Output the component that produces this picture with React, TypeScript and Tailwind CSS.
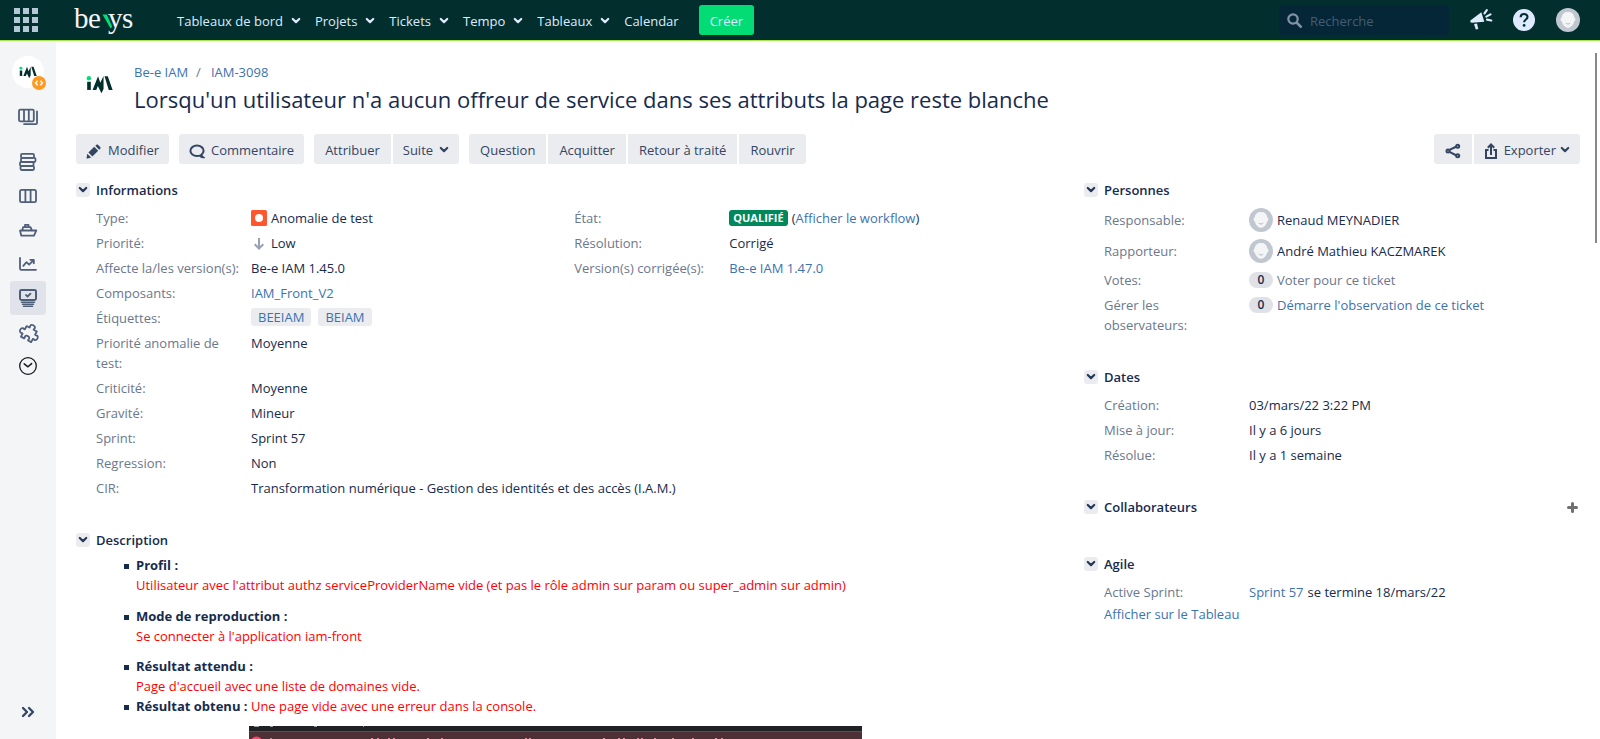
import type { ReactNode } from "react";

const navItems = ["Tableaux de bord", "Projets", "Tickets", "Tempo", "Tableaux"];

function Chevron({ className = "" }: { className?: string }) {
  return (
    <svg className={className} width="10" height="8" viewBox="0 0 10 8" fill="none" aria-hidden="true">
      <path d="M1.8 2l3.2 3.1L8.2 2" stroke="currentColor" strokeWidth="2.2" strokeLinecap="round" strokeLinejoin="round" />
    </svg>
  );
}

function BrandLogo() {
  return (
    <svg width="64" height="40" viewBox="0 0 64 40" fontSize="29" fontFamily="Liberation Serif, serif" fill="#f4f5f7" role="img" aria-label="bewys">
      <text x="0" y="28">
        b
      </text>
      <text x="14" y="28">
        e
      </text>
      <path d="M28.500 14.500h4.300l5.400 12-1.600 2z" fill="#03dc75" />
      <text x="34" y="28">
        y
      </text>
      <text x="48" y="28">
        s
      </text>
    </svg>
  );
}

function ProjectMark({ width }: { width: number }) {
  return (
    <svg width={width} viewBox="0 0 28 20" aria-hidden="true">
      <circle cx="3" cy="3.4" r="2.3" fill="#03dc75" />
      <path d="M1.2 7h3.800v8.500H1.200z" fill="#022f2e" />
      <path d="M6.800 15.500L12.500 1.200 14.800 8l3.400-7v13.500L16 19l-3.700-7.500-1.700 4z" fill="#022f2e" />
      <path d="M19.200 1.200h3.400l5 14.300h-4z" fill="#022f2e" />
    </svg>
  );
}

function Avatar() {
  return (
    <svg className="shrink-0" width="24" height="24" viewBox="0 0 24 24" aria-hidden="true">
      <circle cx="12" cy="12" r="12" fill="#c1c7d0" />
      <path
        d="M12 4c-3.600 0-6 2-6.300 5.500C4.300 9.800 4 12.700 5.800 13.500 6.800 17.300 9.500 19.800 12 19.800s5.200-2.500 6.200-6.300C20 12.700 19.700 9.800 18.300 9.500 18 6 15.600 4 12 4z"
        fill="#f4f5f7"
      />
      <path d="M10 15.300c1 1.100 3 1.100 4 0" stroke="#b3bac5" fill="none" strokeLinecap="round" />
    </svg>
  );
}

function SideIcon({ children, color = "#505f79" }: { children: ReactNode; color?: string }) {
  return (
    <svg width="24" height="24" viewBox="0 0 24 24" fill="none" stroke={color} strokeWidth="1.8" strokeLinejoin="round" strokeLinecap="round" aria-hidden="true">
      {children}
    </svg>
  );
}

const sideEntries = [
  {
    label: "Backlog",
    icon: (
      <SideIcon>
        <rect x="5" y="3.800" width="13" height="4" rx="1.200" />
        <rect x="5" y="7.800" width="14.500" height="4.200" rx="1.200" />
        <rect x="4" y="12" width="13.500" height="4" rx="1.200" />
        <rect x="4.500" y="16" width="13.500" height="4" rx="1.200" />
      </SideIcon>
    ),
  },
  {
    label: "Tableau",
    icon: (
      <SideIcon>
        <rect x="4" y="5.800" width="16" height="12.400" rx="1.600" />
        <path d="M9.400 6v12M14.600 6v12" />
      </SideIcon>
    ),
  },
  {
    label: "Versions",
    icon: (
      <SideIcon>
        <path d="M4 12.500h16.300l-2.300 5.200H5.300zM6.300 12.500l.8-3.400h7.400l1.400 3.200M9 9V6.800h3.500V9" />
      </SideIcon>
    ),
  },
  {
    label: "Rapports",
    icon: (
      <SideIcon>
        <path d="M4 6v10.500c0 .8.500 1.300 1.300 1.300H20M7.300 13.800l3.200-3.600 2.600 2.400 4.300-4.300M14.300 7.800h3.500v3.500" />
      </SideIcon>
    ),
  },
  {
    label: "Tickets",
    active: true,
    icon: (
      <SideIcon>
        <rect x="4" y="4" width="16" height="10" rx="1.400" strokeWidth="2" />
        <path d="M10 9l1.600 1.500L14.500 7.600" />
        <path d="M5.500 16.300h13M6.500 18.300h11M7.500 20.300h9" strokeWidth="1.500" />
      </SideIcon>
    ),
  },
  {
    label: "Extensions",
    icon: (
      <SideIcon>
        <path
          transform="translate(1.500 1.800) rotate(28 11.500 11)"
          d="M6.200 6.200h3.200c.7-.6-.3-1.200-.1-2.300.3-1.900 4.400-2.200 5.100-.2.400 1.200-.8 1.800-.2 2.500h3.600v3.600c.7.700 1.300-.4 2.400-.1 1.900.5 1.900 4.400 0 5-1.100.4-1.700-.8-2.400-.1v3.600h-3.500c-.6-.8.4-1.300.1-2.400-.5-1.800-4.100-1.800-4.600 0-.3 1.100.7 1.600.1 2.400H6.200v-3.500c-.7-.7-1.300.5-2.500.1-1.900-.7-1.900-4.400 0-5 1.200-.4 1.800.7 2.500 0z"
        />
      </SideIcon>
    ),
  },
  {
    label: "Historique",
    icon: (
      <SideIcon color="#16191d">
        <circle cx="12" cy="12" r="8.300" strokeWidth="1.300" />
        <path d="M8.200 9.800l3.800 3 3.600-3.200" strokeWidth="1.500" />
      </SideIcon>
    ),
  },
];

function TopBar() {
  return (
    <header className="flex h-[41px] shrink-0 items-center border-b border-[#a5e84c] bg-[#022f2e] text-[#deebff]">
      <button aria-label="Applications" className="ml-3.5 grid grid-cols-3 gap-[3px]">
        {Array.from({ length: 9 }, (_, i) => (
          <span key={i} className="size-1.5 bg-[#b3c7d6]" />
        ))}
      </button>
      <a href="#accueil" className="ml-9">
        <BrandLogo />
      </a>
      <nav className="ml-[39px] flex items-center gap-3.5 pt-0.5">
        {navItems.map((item) => (
          <button key={item} className="flex items-center gap-2">
            {item}
            <Chevron />
          </button>
        ))}
        <a href="#calendar">Calendar</a>
      </nav>
      <button className="ml-5 h-[30px] rounded-[3px] bg-[#03dc75] px-[11px] pt-0.5">Créer</button>
      <div className="ml-auto flex h-[30px] w-[170px] items-center gap-2 rounded-[3px] bg-[#042637] pl-2">
        <svg width="15" height="15" viewBox="0 0 15 15" fill="none" stroke="#8393a7" aria-hidden="true">
          <circle cx="6" cy="6" r="4.700" strokeWidth="2.200" />
          <path d="M9.700 9.700l4 4" strokeWidth="2.600" strokeLinecap="round" />
        </svg>
        <input aria-label="Recherche" placeholder="Recherche" className="w-32 bg-transparent pt-0.5 outline-none placeholder:text-[#455d73]" />
      </div>
      <button aria-label="Annonces" className="ml-5">
        <svg width="24" height="24" viewBox="0 0 24 24" aria-hidden="true">
          <path d="M12.300 4.200L15.300 13.800 3 14.800c-1.500 0-2.300-1.600-1.300-2.600z" fill="#deebff" />
          <path d="M5 16l3-.4 1.300 5.400-2.500.6z" fill="#deebff" />
          <path d="M15.500 5.300l2.300-3.100M17.300 8.600l4.200-2.200M18 11.700l4.300.8" stroke="#deebff" strokeWidth="2.200" strokeLinecap="round" />
        </svg>
      </button>
      <button aria-label="Aide" className="ml-5">
        <svg width="22" height="22" viewBox="0 0 22 22" aria-hidden="true">
          <circle cx="11" cy="11" r="11" fill="#deebff" />
          <path d="M7.600 8.300c.1-4.400 7-4.200 6.900-.2 0 2.500-3.400 2.400-3.400 5.200" stroke="#022f2e" strokeWidth="2.100" fill="none" />
          <circle cx="11.100" cy="16.400" r="1.400" fill="#022f2e" />
        </svg>
      </button>
      <button aria-label="Profil" className="mr-5 ml-[21px]">
        <Avatar />
      </button>
    </header>
  );
}

function Sidebar() {
  return (
    <aside className="flex w-14 shrink-0 flex-col items-center bg-[#f4f5f7]">
      <a href="#projet" aria-label="Be-e IAM" className="relative mt-[15px] flex size-8 items-center justify-center rounded-full bg-white">
        <ProjectMark width={18} />
        <svg className="absolute top-5 left-5" width="14" height="14" viewBox="0 0 14 14" aria-hidden="true">
          <circle cx="7" cy="7" r="7" fill="#ff991f" />
          <path d="M5.600 4.700L3.600 7l2 2.300M8.400 4.700l2 2.300-2 2.300" stroke="#fff" strokeWidth="1.500" fill="none" />
        </svg>
      </a>
      <button aria-label="Tableaux" className="mt-4">
        <SideIcon>
          <rect x="3" y="5.700" width="14.800" height="11.600" rx="1.200" />
          <path d="M8 6v11M12.800 6v11M21 7.500v11.600c0 .6-.4 1-1 1H8" />
        </SideIcon>
      </button>
      <nav className="mt-[17px] flex flex-col">
        {sideEntries.map((entry) => (
          <a
            key={entry.label}
            href={"#" + entry.label}
            aria-label={entry.label}
            className={entry.active ? "flex h-[34px] w-9 items-center justify-center rounded-[3px] bg-[#e0e3e9]" : "flex h-[34px] w-9 items-center justify-center"}
          >
            {entry.icon}
          </a>
        ))}
      </nav>
      <button aria-label="Développer" className="mt-auto mb-5">
        <svg width="16" height="14" viewBox="0 0 16 14" fill="none" stroke="#344563" strokeWidth="2.300" strokeLinecap="round" strokeLinejoin="round" aria-hidden="true">
          <path d="M3 3l4 4-4 4M9 3l4 4-4 4" />
        </svg>
      </button>
    </aside>
  );
}

function ToolButton({ children, shape = "rounded-[3px] px-2.5", label }: { children: ReactNode; shape?: string; label?: string }) {
  return (
    <button aria-label={label} className={"flex h-[30px] items-center bg-[#ebecf0] pt-0.5 text-[#344563] " + shape}>
      {children}
    </button>
  );
}

function Toolbar() {
  return (
    <div className="mt-[21px] flex gap-2.5">
      <ToolButton>
        <svg className="mt-0.5 mr-[7px]" width="15" height="15" viewBox="0 0 15 15" fill="currentColor" aria-hidden="true">
          <path d="M1.300 9.700l3.900 3.900-3.600 1c-.7.100-1.100-.3-1-.9zM2.400 8.500l5.800-5.700 4 4-5.800 5.800zM9.300 1.800l1-.9c.6-.6 1.300-.6 1.900 0l2 2c.6.6.6 1.200 0 1.800l-1 1z" />
        </svg>
        Modifier
      </ToolButton>
      <ToolButton>
        <svg className="mt-0.5 mr-1.5" width="16" height="15" viewBox="0 0 16 15" fill="none" stroke="currentColor" strokeWidth="2" aria-hidden="true">
          <path d="M12.300 10.900c1.400-1 2.300-2.500 2.300-4.100C14.600 4 11.700 1.600 8 1.600S1.400 4 1.400 6.800 4.300 12 8 12c1 0 2-.1 2.800-.4.800 1 2 1.700 3.200 1.700-.9-.7-1.400-1.500-1.700-2.400z" />
        </svg>
        Commentaire
      </ToolButton>
      <div className="flex gap-0.5">
        <ToolButton shape="rounded-l-[3px] px-[11px]">Attribuer</ToolButton>
        <ToolButton shape="rounded-r-[3px] px-2.5">
          Suite
          <Chevron className="ml-1.5" />
        </ToolButton>
      </div>
      <div className="flex gap-0.5">
        <ToolButton shape="rounded-l-[3px] px-[11px]">Question</ToolButton>
        <ToolButton shape="px-[11px]">Acquitter</ToolButton>
        <ToolButton shape="px-[11px]">Retour à traité</ToolButton>
        <ToolButton shape="rounded-r-[3px] px-[11px]">Rouvrir</ToolButton>
      </div>
      <div className="ml-auto flex gap-0.5">
        <ToolButton shape="rounded-l-[3px] px-[11px]" label="Partager">
          <svg className="mt-0.5" width="16" height="16" viewBox="0 0 16 16" fill="none" stroke="currentColor" strokeWidth="2" aria-hidden="true">
            <path d="M4 7.200l7.500-3.700M4 8.700l7.500 3.800" />
            <circle cx="3" cy="8" r="1.500" />
            <circle cx="12.700" cy="3.200" r="1.500" />
            <circle cx="12.700" cy="12.800" r="1.500" />
          </svg>
        </ToolButton>
        <ToolButton shape="rounded-r-[3px] px-2.5">
          <svg className="mt-0.5 mr-1.5" width="14" height="16" viewBox="0 0 14 16" fill="none" stroke="currentColor" strokeWidth="2" aria-hidden="true">
            <path d="M4.500 7H2v8h10V7H9.500M7 12V2" />
            <path d="M3.800 4.700L7 1.500l3.200 3.200" />
          </svg>
          Exporter
          <Chevron className="ml-1" />
        </ToolButton>
      </div>
    </div>
  );
}

function Section({ title, children, action }: { title: string; children?: ReactNode; action?: ReactNode }) {
  return (
    <section>
      <div className="flex items-center">
        <button aria-label={"Réduire " + title} className="flex size-3.5 items-center justify-center rounded-[3px] bg-[#ebecf0] text-[#253858]">
          <Chevron />
        </button>
        <h2 className="ml-1.5 font-semibold">{title}</h2>
        {action}
      </div>
      <div className="pl-5">{children}</div>
    </section>
  );
}

function Field({ label, children, narrow }: { label: string; children: ReactNode; narrow?: boolean }) {
  return (
    <div className="flex">
      <dt className={narrow ? "w-[145px] shrink-0 pr-9 text-[#6b778c]" : "w-[155px] shrink-0 pr-2 text-[#6b778c]"}>{label}</dt>
      <dd className="flex items-center gap-1 self-start">{children}</dd>
    </div>
  );
}

function Link({ children }: { children: ReactNode }) {
  return (
    <a href="#lien" className="text-[#3b73af]">
      {children}
    </a>
  );
}

function Badge({ children }: { children: ReactNode }) {
  return <span className="h-4 w-6 rounded-full bg-[#dfe1e6] text-center text-xs leading-4 font-semibold">{children}</span>;
}

function Details() {
  return (
    <Section title="Informations">
      <div className="mt-2 grid grid-cols-[49%_51%]">
        <dl className="flex flex-col gap-[5px]">
          <Field label="Type:">
            <svg width="16" height="16" viewBox="0 0 16 16" aria-hidden="true">
              <rect width="16" height="16" rx="1.500" fill="#ff5630" />
              <circle cx="8" cy="8" r="4" fill="#fff" />
            </svg>
            Anomalie de test
          </Field>
          <Field label="Priorité:">
            <svg width="16" height="16" viewBox="0 0 16 16" fill="none" stroke="#97a0b5" strokeWidth="2" aria-hidden="true">
              <path d="M8 3v10M3.700 9.300L8 13.500l4.300-4.200" />
            </svg>
            Low
          </Field>
          <Field label="Affecte la/les version(s):">Be-e IAM 1.45.0</Field>
        </dl>
        <dl className="flex flex-col gap-[5px] pl-0.5">
          <Field label="État:">
            <span className="h-4 rounded-[3px] bg-[#00875a] px-1 text-[11px] leading-4 font-bold text-white">QUALIFIÉ</span>
            <span>
              (<Link>Afficher le workflow</Link>)
            </span>
          </Field>
          <Field label="Résolution:">Corrigé</Field>
          <Field label="Version(s) corrigée(s):">
            <Link>Be-e IAM 1.47.0</Link>
          </Field>
        </dl>
      </div>
      <dl className="mt-[5px] flex flex-col gap-[5px]">
        <Field label="Composants:">
          <Link>IAM_Front_V2</Link>
        </Field>
        <Field label="Étiquettes:">
          <span className="flex gap-[7px] leading-[18px]">
            <a href="#beeiam" className="rounded-[3px] bg-[#ebecf0] px-[7px] text-[#3b73af]">
              BEEIAM
            </a>
            <a href="#beiam" className="rounded-[3px] bg-[#ebecf0] px-[7px] text-[#3b73af]">
              BEIAM
            </a>
          </span>
        </Field>
        <Field label="Priorité anomalie de test:">Moyenne</Field>
        <Field label="Criticité:">Moyenne</Field>
        <Field label="Gravité:">Mineur</Field>
        <Field label="Sprint:">Sprint 57</Field>
        <Field label="Regression:">Non</Field>
        <Field label="CIR:">Transformation numérique - Gestion des identités et des accès (I.A.M.)</Field>
      </dl>
    </Section>
  );
}

function ConsoleCapture() {
  const specks = [122, 128, 139, 144, 178, 192, 276, 280, 354, 369, 374, 388, 392, 405, 423, 443, 466, 472];
  return (
    <svg className="mt-2.5 ml-[113px] block max-w-full" width="613" height="40" viewBox="0 0 613 40" role="img" aria-label="Console">
      <rect width="613" height="40" fill="#202124" />
      <rect y="5" width="613" height="35" fill="#4e3037" />
      <rect y="5" width="613" height="1" fill="#7a3f4a" />
      <path d="M5 0h5M21 0h3M65 0h3M114 0h1" stroke="#9aa0a6" strokeWidth="2" />
      <circle cx="7.500" cy="16.500" r="6" fill="#ff4070" />
      <rect x="21" y="12" width="2" height="1" fill="#b0888f" />
      {specks.map((x) => (
        <rect key={x} x={x} y="12" width="2" height="1" fill="#e08b9d" />
      ))}
    </svg>
  );
}

function Entry({ title, children }: { title: string; children: ReactNode }) {
  return (
    <li className="before:mr-[7px] before:-ml-3 before:inline-block before:size-[5px] before:bg-current before:align-middle">
      <strong>{title}</strong>
      {children}
    </li>
  );
}

function Description() {
  return (
    <div className="mt-8">
      <Section title="Description">
        <ul className="mt-[5px] pl-10">
          <Entry title="Profil :">
            <p className="mb-[11px] text-[#ff0000]">
              Utilisateur avec l'attribut authz serviceProviderName vide (et pas le rôle admin sur param ou super_admin sur admin)
            </p>
          </Entry>
          <Entry title="Mode de reproduction :">
            <p className="mb-2.5 text-[#ff0000]">Se connecter à l'application iam-front</p>
          </Entry>
          <Entry title="Résultat attendu :">
            <p className="text-[#ff0000]">Page d'accueil avec une liste de domaines vide.</p>
          </Entry>
          <Entry title="Résultat obtenu :">
            <span className="text-[#ff0000]"> Une page vide avec une erreur dans la console.</span>
            <ConsoleCapture />
          </Entry>
        </ul>
      </Section>
    </div>
  );
}

function SidePanel() {
  return (
    <div className="flex flex-col">
      <Section title="Personnes">
        <dl className="mt-2 flex flex-col gap-[5px]">
          <div className="flex flex-col gap-[7px] pb-0.5 leading-6">
            <Field narrow label="Responsable:">
              <Avatar />
              Renaud MEYNADIER
            </Field>
            <Field narrow label="Rapporteur:">
              <Avatar />
              André Mathieu KACZMAREK
            </Field>
          </div>
          <Field narrow label="Votes:">
            <Badge>0</Badge>
            <span className="text-[#6b778c]">Voter pour ce ticket</span>
          </Field>
          <Field narrow label="Gérer les observateurs:">
            <Badge>0</Badge>
            <Link>Démarre l'observation de ce ticket</Link>
          </Field>
        </dl>
      </Section>
      <div className="mt-8">
        <Section title="Dates">
          <dl className="mt-2 flex flex-col gap-[5px]">
            <Field narrow label="Création:">03/mars/22 3:22 PM</Field>
            <Field narrow label="Mise à jour:">Il y a 6 jours</Field>
            <Field narrow label="Résolue:">Il y a 1 semaine</Field>
          </dl>
        </Section>
      </div>
      <div className="mt-8">
        <Section
          title="Collaborateurs"
          action={
            <button aria-label="Ajouter un collaborateur" className="mr-0.5 ml-auto">
              <svg width="11" height="11" viewBox="0 0 11 11" stroke="#707070" strokeWidth="3" strokeLinecap="round" aria-hidden="true">
                <path d="M5.500 1.500v8M1.500 5.500h8" />
              </svg>
            </button>
          }
        />
      </div>
      <div className="mt-[37px]">
        <Section title="Agile">
          <dl className="mt-2">
            <Field narrow label="Active Sprint:">
              <Link>Sprint 57</Link> se termine 18/mars/22
            </Field>
          </dl>
          <p className="mt-0.5">
            <Link>Afficher sur le Tableau</Link>
          </p>
        </Section>
      </div>
    </div>
  );
}

export default function App() {
  return (
    <div className="flex h-screen flex-col overflow-hidden bg-white font-['Open_Sans',sans-serif] text-[13px] leading-5 text-[#172b4d]">
      <TopBar />
      <div className="flex min-h-0 grow">
        <Sidebar />
        <main className="relative min-w-0 grow overflow-hidden px-5 pt-[21px]">
          <div className="flex items-center">
            <div className="flex w-[58px] justify-start pb-1.5 pl-2.5">
              <ProjectMark width={27} />
            </div>
            <div>
              <div className="flex">
                <Link>Be-e IAM</Link>
                <span className="mr-2.5 ml-2 text-[#6b778c]">/</span>
                <Link>IAM-3098</Link>
              </div>
              <h1 className="mt-[3px] text-[22px] leading-7">
                Lorsqu'un utilisateur n'a aucun offreur de service dans ses attributs la page reste blanche
              </h1>
            </div>
          </div>
          <Toolbar />
          <div className="mt-4 grid grid-cols-[2fr_1fr] gap-4">
            <div>
              <Details />
              <Description />
            </div>
            <SidePanel />
          </div>
          <div className="absolute top-3 right-[3px] h-[190px] w-0.5 bg-[#888888]" />
        </main>
      </div>
    </div>
  );
}
